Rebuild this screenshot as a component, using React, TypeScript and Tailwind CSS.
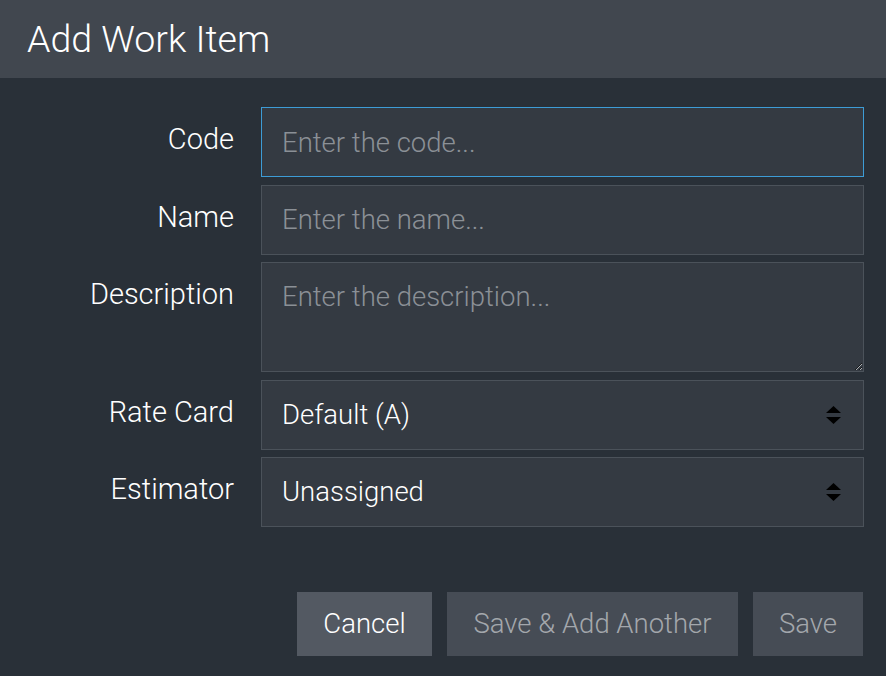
import { ReactNode } from "react"

const font = { fontFamily: "Roboto, 'Open Sans', sans-serif" }

function SortArrows() {
  return (
    <svg
      className="pointer-events-none absolute right-[23px] top-1/2 -translate-y-1/2"
      width="15"
      height="18"
      viewBox="0 0 15 18"
    >
      <path d="M7.5 0 L15 7 L0 7 Z" fill="#000" />
      <path d="M0 11 L15 11 L7.5 18 Z" fill="#000" />
    </svg>
  )
}

function Row({ label, children }: { label: string; children: ReactNode }) {
  return (
    <div className="flex items-start gap-[27px]">
      <label className="w-[234px] shrink-0 pt-[14px] text-right text-[29px] font-light leading-[36px] text-white">
        {label}
      </label>
      <div className="flex-1">{children}</div>
    </div>
  )
}

const field =
  "w-full bg-[#343a42] border px-5 text-[27.5px] font-light text-white placeholder-[#8b9096] outline-none"

export default function App() {
  return (
    <div className="flex min-h-[676px] flex-col bg-[#293038]" style={font}>
      <header className="flex h-[78px] items-center bg-[#41474f] px-[27px]">
        <h1 className="text-[37.5px] font-light text-white">Add Work Item</h1>
      </header>

      <div className="flex flex-col gap-[7.5px] pr-[22px] pt-[29px]">
        <Row label="Code">
          <input
            className={`${field} h-[70px] border-[#3d9cd6]`}
            placeholder="Enter the code..."
          />
        </Row>
        <Row label="Name">
          <input className={`${field} h-[70px] border-[#4b525a]`} placeholder="Enter the name..." />
        </Row>
        <Row label="Description">
          <textarea
            className={`${field} block h-[110px] border-[#4b525a] py-[16px] leading-[36px]`}
            placeholder="Enter the description..."
          />
        </Row>
        <Row label="Rate Card">
          <div className="relative">
            <select
              className={`${field} h-[70px] appearance-none border-[#4b525a]`}
              defaultValue="a"
            >
              <option value="a">Default (A)</option>
            </select>
            <SortArrows />
          </div>
        </Row>
        <Row label="Estimator">
          <div className="relative">
            <select
              className={`${field} h-[70px] appearance-none border-[#4b525a]`}
              defaultValue="u"
            >
              <option value="u">Unassigned</option>
            </select>
            <SortArrows />
          </div>
        </Row>
      </div>

      <div className="flex justify-end gap-[15px] pr-[23px] pt-[65px]">
        <button className="h-[64px] w-[135px] bg-[#535962] text-[27.5px] font-light text-white">
          Cancel
        </button>
        <button className="h-[64px] w-[291px] bg-[#464c55] text-[27.5px] font-light text-[#a3a7ac]">
          Save &amp; Add Another
        </button>
        <button className="h-[64px] w-[110px] bg-[#464c55] text-[27.5px] font-light text-[#a3a7ac]">
          Save
        </button>
      </div>
    </div>
  )
}
